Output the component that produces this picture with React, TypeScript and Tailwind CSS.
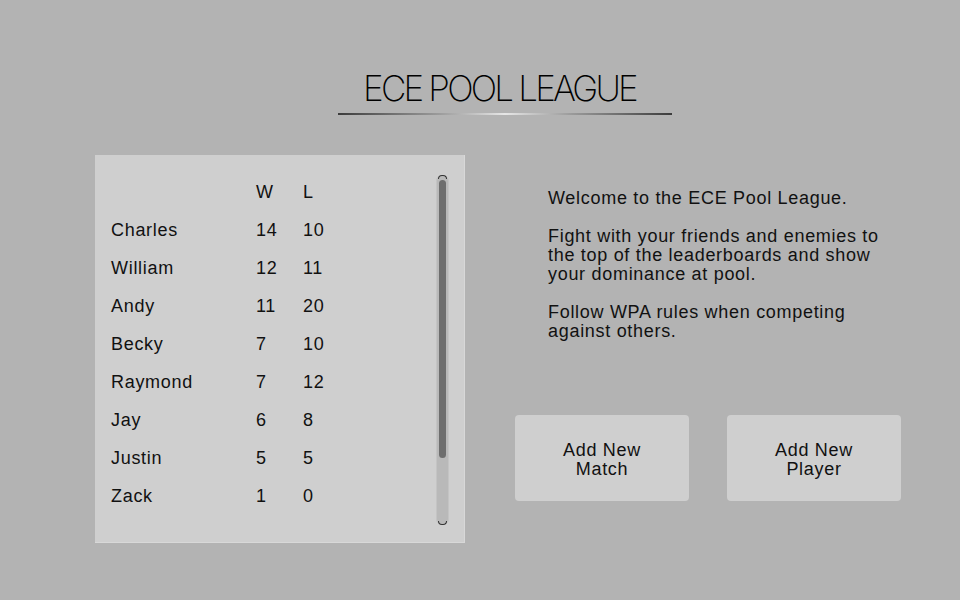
import React from "react";

const players: [string, number, number][] = [
  ["Charles", 14, 10],
  ["William", 12, 11],
  ["Andy", 11, 20],
  ["Becky", 7, 10],
  ["Raymond", 7, 12],
  ["Jay", 6, 8],
  ["Justin", 5, 5],
  ["Zack", 1, 0],
];

export default function App() {
  return (
    <div
      className="w-[960px] h-[600px] bg-[#b3b3b3] text-[#111] overflow-hidden tracking-[0.7px]"
      style={{ fontFamily: '"Liberation Sans", Arial, sans-serif' }}
    >
      <div className="pt-[68px] ml-[338px] w-[334px] flex flex-col items-center">
        <div
          className="text-[35px] leading-[40px] font-extralight text-[#000] pr-[11px] tracking-[-2.8px] antialiased"
          style={{ fontFamily: 'Inter, "DejaVu Sans", sans-serif' }}
        >
          ECE POOL LEAGUE
        </div>
        <div className="mt-[5px] w-full h-[2px] bg-[linear-gradient(90deg,#3c3c3c_0%,#9a9a9a_30%,#e6e6e6_50%,#9a9a9a_70%,#3c3c3c_100%)]" />
      </div>

      <div className="flex mt-[40px]">
        <div className="ml-[95px] w-[370px] h-[388px] bg-[#cfcfcf] flex shadow-[inset_-1px_-1px_0_#d8d8d8]">
          <div className="flex-1 pl-[16px] pt-[26px] text-[18px]">
            <div className="flex h-[22px] items-center">
              <div className="w-[145px]" />
              <div className="w-[47px]">W</div>
              <div>L</div>
            </div>
            {players.map(([n, w, l]) => (
              <div key={n} className="flex h-[22px] items-center mt-[16px]">
                <div className="w-[145px]">{n}</div>
                <div className="w-[47px]">{w}</div>
                <div>{l}</div>
              </div>
            ))}
          </div>
          <div className="mt-[20px] mr-[16px] w-[13px] h-[350px] bg-[#b9b9b9] rounded-[6px] relative border-[1px] border-[#c4c4c4]">
            <div className="absolute left-[2px] top-[4px] w-[7px] h-[278px] bg-[#6e6e6e] rounded-[4px]" />
            <div className="absolute left-[1px] top-[-1px] w-[9px] h-[4px] border-t-[1px] border-l-[1px] border-r-[1px] border-[#333] rounded-t-[5px]" />
            <div className="absolute left-[1px] bottom-[-1px] w-[9px] h-[4px] border-b-[1px] border-l-[1px] border-r-[1px] border-[#333] rounded-b-[5px]" />
          </div>
        </div>

        <div className="ml-[50px] flex flex-col">
          <div className="ml-[33px] mt-[34px] w-[348px] text-[18px] leading-[19px] h-[226px]">
            <p>Welcome to the ECE Pool League.</p>
            <p className="mt-[19px]">
              Fight with your friends and enemies to the top of the leaderboards and show your dominance at pool.
            </p>
            <p className="mt-[19px]">
              Follow WPA rules when competing
              <br />
              against others.
            </p>
          </div>
          <div className="flex gap-[38px]">
            <button className="w-[174px] h-[86px] bg-[#cfcfcf] rounded-[4px] text-[18px] leading-[19px] text-[#111] flex items-center justify-center text-center pt-[4px] tracking-[0.7px]">
              Add New
              <br />
              Match
            </button>
            <button className="w-[174px] h-[86px] bg-[#cfcfcf] rounded-[4px] text-[18px] leading-[19px] text-[#111] flex items-center justify-center text-center pt-[4px] tracking-[0.7px]">
              Add New
              <br />
              Player
            </button>
          </div>
        </div>
      </div>
    </div>
  );
}
